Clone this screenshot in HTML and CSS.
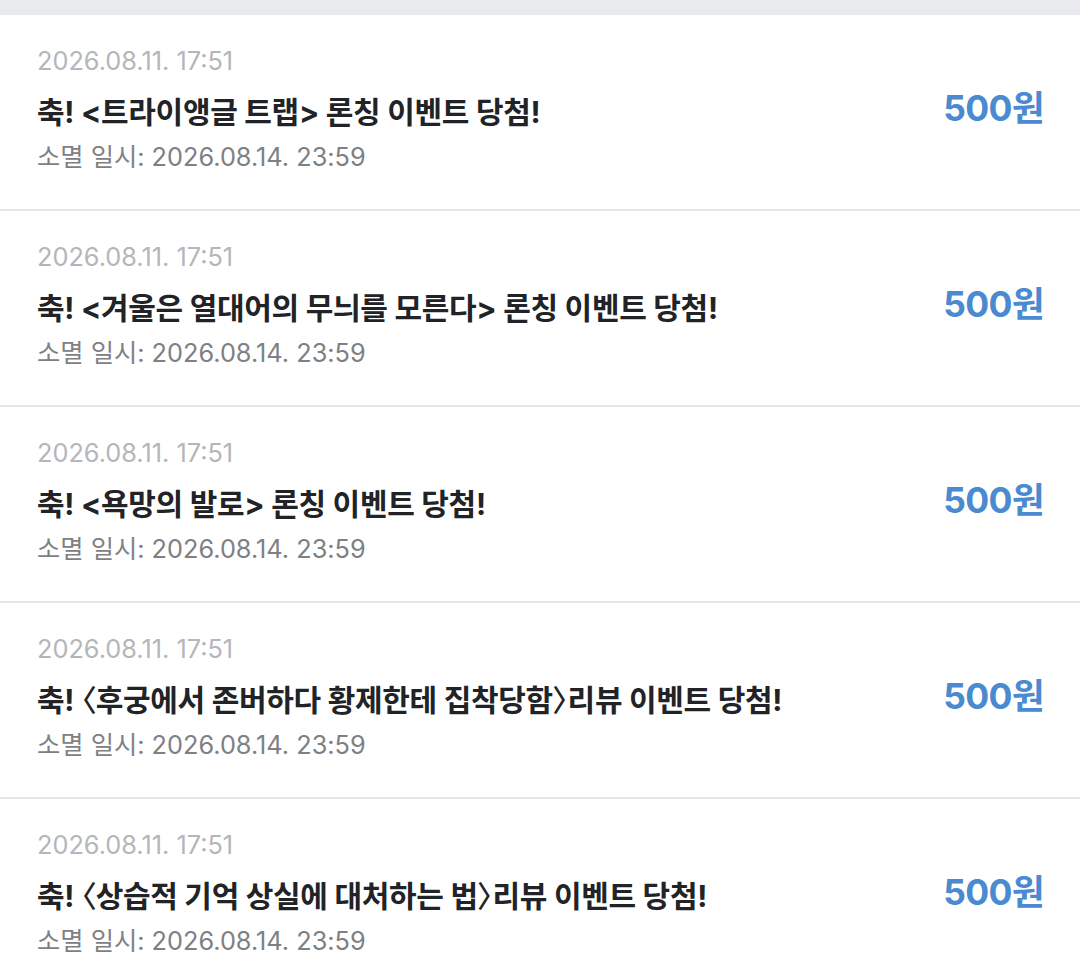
FILE: index.html
```html
<!DOCTYPE html>
<html lang="ko">
<head>
<meta charset="utf-8">
<link rel="stylesheet" href="styles.css">
</head>
<body>
<div class="topbar"></div>
<ul class="list">
  <li class="item">
    <div class="info">
      <div class="date">2026.08.11. 17:51</div>
      <div class="title">축! &lt;트라이앵글 트랩&gt; 론칭 이벤트 당첨!</div>
      <div class="expire">소멸 일시: 2026.08.14. 23:59</div>
    </div>
    <div class="amount">500원</div>
  </li>
  <li class="item">
    <div class="info">
      <div class="date">2026.08.11. 17:51</div>
      <div class="title">축! &lt;겨울은 열대어의 무늬를 모른다&gt; 론칭 이벤트 당첨!</div>
      <div class="expire">소멸 일시: 2026.08.14. 23:59</div>
    </div>
    <div class="amount">500원</div>
  </li>
  <li class="item">
    <div class="info">
      <div class="date">2026.08.11. 17:51</div>
      <div class="title">축! &lt;욕망의 발로&gt; 론칭 이벤트 당첨!</div>
      <div class="expire">소멸 일시: 2026.08.14. 23:59</div>
    </div>
    <div class="amount">500원</div>
  </li>
  <li class="item">
    <div class="info">
      <div class="date">2026.08.11. 17:51</div>
      <div class="title">축! <span class="br">〈</span>후궁에서 존버하다 황제한테 집착당함<span class="br">〉</span>리뷰 이벤트 당첨!</div>
      <div class="expire">소멸 일시: 2026.08.14. 23:59</div>
    </div>
    <div class="amount">500원</div>
  </li>
  <li class="item">
    <div class="info">
      <div class="date">2026.08.11. 17:51</div>
      <div class="title">축! <span class="br">〈</span>상습적 기억 상실에 대처하는 법<span class="br">〉</span>리뷰 이벤트 당첨!</div>
      <div class="expire">소멸 일시: 2026.08.14. 23:59</div>
    </div>
    <div class="amount">500원</div>
  </li>
</ul>
</body>
</html>
```
FILE: styles.css
```css
* { box-sizing: border-box; }
html, body { margin: 0; padding: 0; background: #ffffff; }
body {
  font-family: Inter, "Noto Sans CJK KR", sans-serif;
  width: 1080px;
  height: 974px;
  overflow: hidden;
}
.topbar { height: 15px; background: #e9eaed; }
.list { list-style: none; margin: 0; padding: 0; }
.item {
  height: 196px;
  border-bottom: 2px solid #e6e6e8;
  display: flex;
  align-items: flex-start;
  justify-content: space-between;
  padding: 29px 36px 0 37px;
}
.info { display: flex; flex-direction: column; }
.date { font-size: 25.3px; line-height: 34px; color: #b4b6b9; letter-spacing: 0; }
.title { margin-top: 15px; font-size: 30px; line-height: 38px; font-weight: 700; color: #222326; letter-spacing: -0.3px; }
.br { font-feature-settings: "palt"; font-weight: 500; }
.expire { margin-top: 9px; font-size: 25.3px; line-height: 34px; color: #7e8084; letter-spacing: 0; }
.amount { margin-top: 45px; font-size: 35.5px; line-height: 40px; font-weight: 700; color: #4a8ad0; letter-spacing: -0.6px; }
```
